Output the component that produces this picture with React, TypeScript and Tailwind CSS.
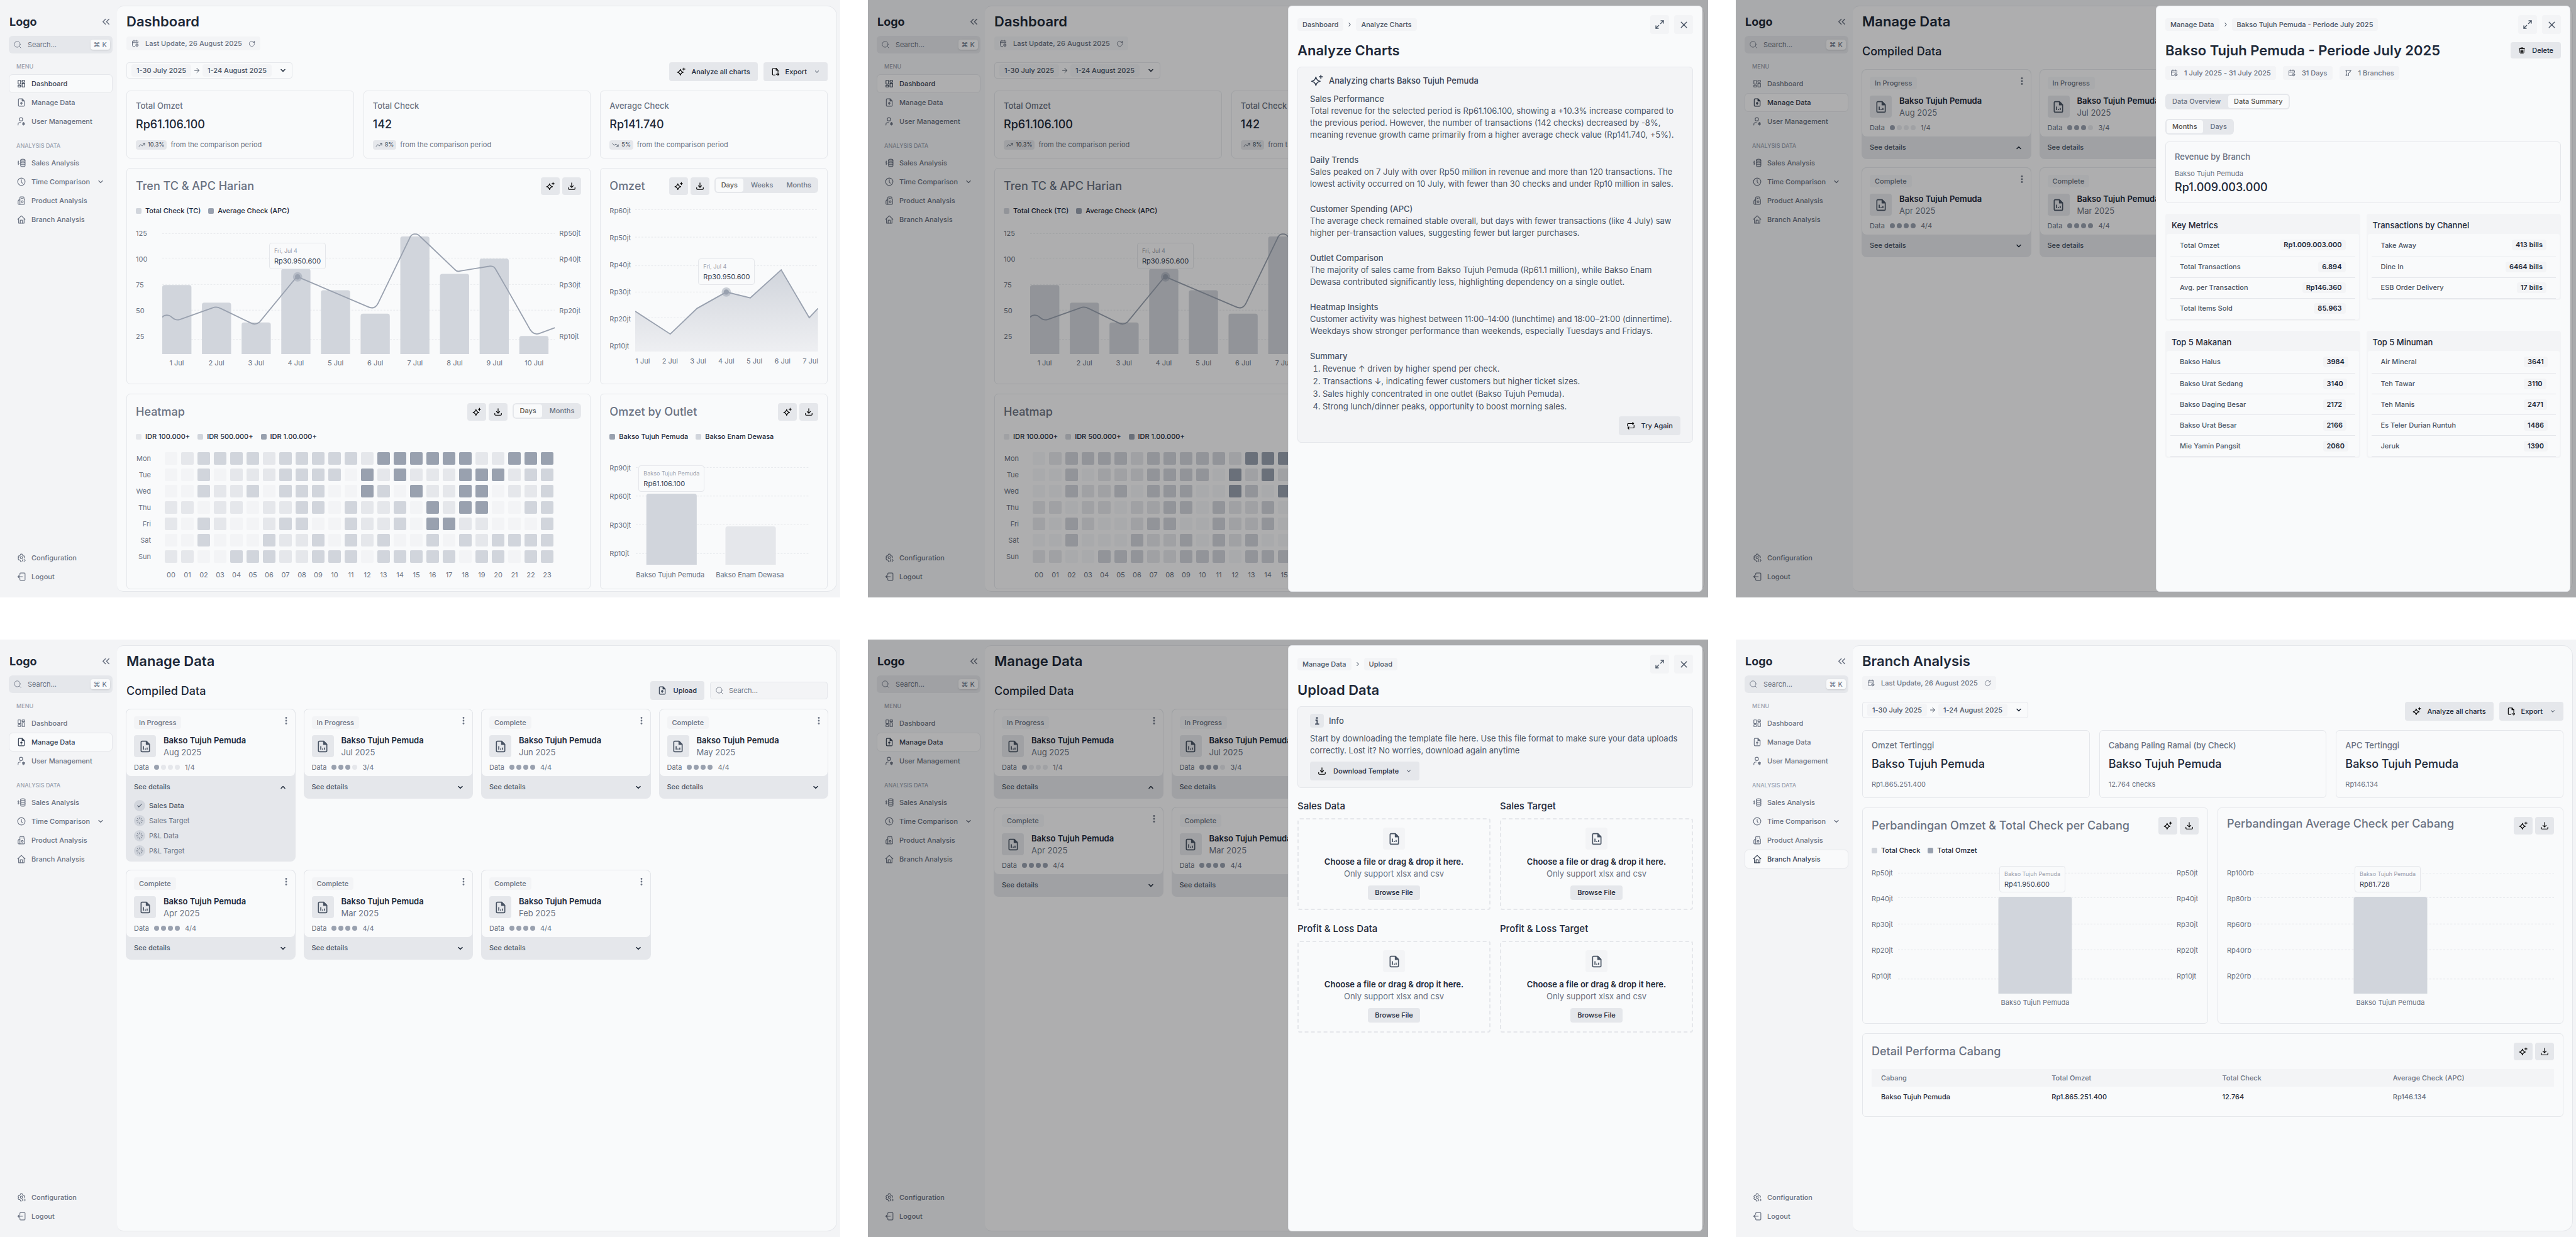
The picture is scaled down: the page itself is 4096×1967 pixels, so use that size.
import { useId, type ReactNode } from "react";
import {
  ArrowRight,
  Check,
  ChevronDown,
  ChevronRight,
  ChevronUp,
  ChevronsLeft,
  Loader,
  Maximize2,
  RotateCw,
  Search,
  TrendingDown,
  TrendingUp,
  X,
} from "lucide-react";

/* ---------- icons ---------- */

type IconProps = { className?: string; strokeWidth?: number };

function Icon({ className = "size-3.5", strokeWidth = 2, children }: IconProps & { children: ReactNode }) {
  return (
    <svg
      viewBox="0 0 24 24"
      fill="none"
      stroke="currentColor"
      strokeWidth={strokeWidth}
      strokeLinecap="round"
      strokeLinejoin="round"
      className={`shrink-0 ${className}`}
      aria-hidden="true"
    >
      {children}
    </svg>
  );
}

const SparkleIcon = (p: IconProps) => (
  <Icon {...p}>
    <path d="M10 5.5C11 10 13.500 12.500 18 13.500C13.500 14.500 11 17 10 21.500C9 17 6.500 14.500 2 13.500C6.500 12.500 9 10 10 5.500Z" />
    <path d="M19.500 2v6M16.500 5h6" />
  </Icon>
);

const DownloadIcon = (p: IconProps) => (
  <Icon {...p}>
    <path d="M12 3v12M7.5 11l4.5 4.5 4.5-4.5M3 16v3a2 2 0 0 0 2 2h14a2 2 0 0 0 2-2v-3" />
  </Icon>
);

const ExportIcon = (p: IconProps) => (
  <Icon {...p}>
    <path d="M11 21H6a2 2 0 0 1-2-2V5a2 2 0 0 1 2-2h8l5 5v6" />
    <path d="M14 3v5h5" />
    <path d="M14 19h7M18.5 16l3 3-3 3" />
  </Icon>
);

const DashboardIcon = (p: IconProps) => (
  <Icon {...p}>
    <rect x="3" y="3" width="7" height="10" rx="1" />
    <rect x="14" y="3" width="7" height="5" rx="1" />
    <rect x="14" y="11" width="7" height="10" rx="1" />
    <rect x="3" y="16" width="7" height="5" rx="1" />
  </Icon>
);

const FileUpIcon = (p: IconProps) => (
  <Icon {...p}>
    <path d="M14 2H6a2 2 0 0 0-2 2v16a2 2 0 0 0 2 2h12a2 2 0 0 0 2-2V8Z" />
    <path d="M14 2v6h6Z" fill="currentColor" />
    <path d="M12 18v-6M9.5 14l2.5-2.5 2.5 2.5Z" fill="currentColor" />
  </Icon>
);

const UserGearIcon = (p: IconProps) => (
  <Icon {...p}>
    <circle cx="11" cy="6.5" r="4.5" />
    <path d="M3 22v-2c0-3 2-5 5.5-5H10" />
    <circle cx="18" cy="18.5" r="2.5" />
    <path d="M18 14.5v8M14.5 16.5l7 4M21.5 16.5l-7 4" strokeWidth={1.5} />
  </Icon>
);

const CoinsIcon = (p: IconProps) => (
  <Icon {...p}>
    <ellipse cx="16" cy="4.5" rx="6" ry="2.5" />
    <path d="M10 4.5v15c0 1.4 2.7 2.5 6 2.5s6-1.1 6-2.5v-15" />
    <path d="M10 9.5c0 1.4 2.7 2.5 6 2.5s6-1.1 6-2.5M10 14.5c0 1.4 2.7 2.5 6 2.5s6-1.1 6-2.5" />
    <path d="M6 9.2C5.5 8.3 2 8 2 10s4 1.6 4 3.8-3.6 1.9-4.200.9M4 6.8v10" strokeWidth={1.6} />
  </Icon>
);

const ClockIcon = (p: IconProps) => (
  <Icon {...p}>
    <circle cx="12" cy="12" r="10" />
    <path d="M12 6.5V12l2.5 4" />
  </Icon>
);

const ProductIcon = (p: IconProps) => (
  <Icon {...p}>
    <path d="M8 22V4a2 2 0 0 1 2-2h7a2 2 0 0 1 2 2v3l2 3v10a2 2 0 0 1-2 2Z" />
    <path d="M8 10H5l-2 3v7a2 2 0 0 0 2 2h3" />
    <circle cx="14.5" cy="15" r="2.5" />
    <path d="M12 6h3" />
  </Icon>
);

const HomeIcon = (p: IconProps) => (
  <Icon {...p}>
    <path d="M2 11.5 12 2l10 9.5" />
    <path d="M4.5 9.5V22h15V9.5" />
    <path d="M9 22v-7a1 1 0 0 1 1-1h4a1 1 0 0 1 1 1v7" />
  </Icon>
);

const ConfigIcon = (p: IconProps) => (
  <Icon {...p}>
    <path d="M20 12.5l1-2.5-2-3.4-2.7.3L14.8 4 14 2h-4l-.8 2-1.6 2.9-2.7-.3L3 10l1.7 2L3 14.5l2 3.4 2.6-.3L9.2 20l.8 2h2" />
    <circle cx="12" cy="11.5" r="3" />
    <path d="M16.5 16.5 14.5 19l2 2.5M20.5 16.5l2 2.5-2 2.5" />
  </Icon>
);

const LogoutIcon = (p: IconProps) => (
  <Icon {...p}>
    <path d="M8 7V4a2 2 0 0 1 2-2h10a2 2 0 0 1 2 2v16a2 2 0 0 1-2 2H10a2 2 0 0 1-2-2v-3" />
    <path d="M15 12H3M6 8.5 2.5 12 6 15.5Z" fill="currentColor" />
  </Icon>
);

const CalendarIcon = (p: IconProps) => (
  <Icon {...p}>
    <path d="M21 10V6a2 2 0 0 0-2-2H5a2 2 0 0 0-2 2v13a2 2 0 0 0 2 2h6" />
    <path d="M8 2v4M16 2v4M3 9.5h18" />
    <circle cx="17.5" cy="17.5" r="4" fill="currentColor" fillOpacity={0.5} />
  </Icon>
);

const BranchesIcon = (p: IconProps) => (
  <Icon {...p}>
    <circle cx="6" cy="5" r="2" />
    <circle cx="6" cy="19" r="2" />
    <path d="M6 7v10M13 17v-5l5-3V7" />
    <circle cx="18" cy="5" r="2" />
    <path d="M11 5h4M13 21v-4" />
  </Icon>
);

const RepeatIcon = (p: IconProps) => (
  <Icon {...p}>
    <path d="M3 13V8a2 2 0 0 1 2-2h15M17 3l3 3-3 3" />
    <path d="M21 11v5a2 2 0 0 1-2 2H4M7 15l-3 3 3 3" />
  </Icon>
);

const TrashIcon = (p: IconProps) => (
  <Icon {...p}>
    <path d="M3 7h18M8 7V4h8v3M5 7l1 13a2 2 0 0 0 2 1h8a2 2 0 0 0 2-1l1-13" />
    <path d="M8 11h8M8.5 14.5h7M9 18h6M10 11v8M14 11v8" />
  </Icon>
);

const FileChartIcon = (p: IconProps) => (
  <Icon {...p}>
    <path d="M14 2H6a2 2 0 0 0-2 2v16a2 2 0 0 0 2 2h12a2 2 0 0 0 2-2V8Z" />
    <path d="M14 2.5V8h5.5Z" fill="currentColor" />
    <path d="M8.5 11.5V18M12 16v2M15.5 14v4" strokeLinecap="butt" />
  </Icon>
);

const InfoIcon = (p: IconProps) => (
  <Icon {...p}>
    <path d="M8 10.5h4.5V21M7 21h11" strokeWidth={3} strokeLinecap="butt" strokeLinejoin="miter" />
    <path d="M10.5 3h3.5v3h-3.5Z" fill="currentColor" strokeWidth={1} />
  </Icon>
);

const KebabIcon = (p: IconProps) => (
  <Icon {...p}>
    <g fill="currentColor" stroke="none">
      <circle cx="12" cy="3" r="2.8" />
      <circle cx="12" cy="12" r="2.8" />
      <circle cx="12" cy="21" r="2.8" />
    </g>
  </Icon>
);

/* ---------- sidebar ---------- */

type NavEntry = { label: string; icon: (p: IconProps) => ReactNode; chevron?: boolean };

const menuItems: NavEntry[] = [
  { label: "Dashboard", icon: DashboardIcon },
  { label: "Manage Data", icon: FileUpIcon },
  { label: "User Management", icon: UserGearIcon },
];
const analysisItems: NavEntry[] = [
  { label: "Sales Analysis", icon: CoinsIcon },
  { label: "Time Comparison", icon: ClockIcon, chevron: true },
  { label: "Product Analysis", icon: ProductIcon },
  { label: "Branch Analysis", icon: HomeIcon },
];
const footerItems: NavEntry[] = [
  { label: "Configuration", icon: ConfigIcon },
  { label: "Logout", icon: LogoutIcon },
];

function NavItem({ item, active }: { item: NavEntry; active?: boolean }) {
  const Glyph = item.icon;
  return (
    <a
      href="#"
      className={`flex h-[30px] items-center gap-[9px] rounded-md border px-3 text-[11px] font-medium ${
        active ? "border-gray-200 bg-gray-50 text-gray-700" : "border-transparent text-gray-500"
      }`}
    >
      <Glyph className="size-3.5" />
      {item.label}
      {item.chevron && <ChevronDown className="ml-auto size-3" strokeWidth={2.5} />}
    </a>
  );
}

function Sidebar({ active }: { active: string }) {
  return (
    <aside className="flex w-[186px] shrink-0 flex-col pt-5 pr-[7px] pb-[18px] pl-3.5">
      <div className="flex h-7 items-center justify-between px-px">
        <span className="text-[18px] font-bold text-gray-800">Logo</span>
        <button type="button" aria-label="Collapse sidebar" className="text-gray-500">
          <ChevronsLeft className="size-[19px]" strokeWidth={2} />
        </button>
      </div>
      <label className="mt-[9px] flex h-7 items-center gap-[9px] rounded-md bg-gray-200 pr-1 pl-[7px] text-gray-500">
        <Search className="size-3.5 shrink-0" strokeWidth={1.5} />
        <input
          type="text"
          aria-label="Search"
          placeholder="Search..."
          className="w-full min-w-0 bg-transparent text-[11px] outline-none placeholder:text-gray-500"
        />
        <kbd className="flex h-4 shrink-0 items-center rounded-[4px] bg-gray-50 px-[5px] font-['Inter'] text-[11px] whitespace-nowrap shadow-sm">
          ⌘ K
        </kbd>
      </label>
      <h2 className="mt-3.5 px-3 text-[9px] leading-[14px] font-medium text-gray-400">MENU</h2>
      <nav className="mt-[5px]">
        {menuItems.map((item) => (
          <NavItem key={item.label} item={item} active={item.label === active} />
        ))}
      </nav>
      <h2 className="mt-[17px] px-3 text-[9px] leading-[14px] font-medium text-gray-400">ANALYSIS DATA</h2>
      <nav className="mt-[5px]">
        {analysisItems.map((item) => (
          <NavItem key={item.label} item={item} active={item.label === active} />
        ))}
      </nav>
      <nav className="mt-auto">
        {footerItems.map((item) => (
          <NavItem key={item.label} item={item} />
        ))}
      </nav>
    </aside>
  );
}

function Frame({ active, drawer, children }: { active: string; drawer?: ReactNode; children: ReactNode }) {
  return (
    <section className="relative flex min-w-0 overflow-hidden bg-gray-100">
      <div className="flex min-w-0 flex-1" inert={Boolean(drawer)}>
        <Sidebar active={active} />
        <main className="my-[9px] mr-[5px] min-w-0 flex-1 rounded-l-[10px] rounded-r-[16px] border border-l-0 border-gray-200 bg-gray-50 pt-2.5 pr-3.5 pl-[15px]">
          {children}
        </main>
      </div>
      {drawer && (
        <>
          <div className="absolute inset-0 bg-black/30" />
          <div
            role="dialog"
            className="absolute top-[9px] right-[9px] bottom-[9px] w-[659px] rounded-md border border-gray-200 bg-gray-50 p-3.5"
          >
            {drawer}
          </div>
        </>
      )}
    </section>
  );
}

/* ---------- shared pieces ---------- */

const PageTitle = ({ children }: { children: ReactNode }) => (
  <h1 className="text-[22px] leading-7 font-semibold text-gray-800">{children}</h1>
);

function GrayButton({ children }: { children: ReactNode }) {
  return (
    <button
      type="button"
      className="flex h-[30px] items-center rounded-[4px] bg-gray-200 px-3 text-[11px] font-medium whitespace-nowrap text-gray-800"
    >
      {children}
    </button>
  );
}

function PageHeader({ title }: { title: string }) {
  return (
    <>
      <PageTitle>{title}</PageTitle>
      <div className="mt-2.5 flex">
        <div className="flex h-[22px] items-center rounded-[4px] bg-gray-100 px-2 text-[11px] font-medium text-gray-500">
          <CalendarIcon className="mr-2.5 size-3" />
          Last Update, 26 August 2025
          <button type="button" aria-label="Refresh" className="ml-2.5">
            <RotateCw className="size-[11px]" />
          </button>
        </div>
      </div>
      <div className="mt-[19px] flex items-start justify-between">
        <button
          type="button"
          aria-label="Select comparison period"
          className="flex h-[26px] items-center rounded-[4px] border border-gray-200 pr-2 pl-[7px] text-[11px] font-medium text-gray-600"
        >
          <span className="rounded-[4px] bg-gray-100 px-2 leading-5">1-30 July 2025</span>
          <ArrowRight className="mx-[3px] size-3" strokeWidth={2} />
          <span className="rounded-[4px] bg-gray-100 px-2 leading-5">1-24 August 2025</span>
          <ChevronDown className="ml-3 size-3 text-gray-800" strokeWidth={3} />
        </button>
        <div className="flex gap-[9px]">
          <GrayButton>
            <SparkleIcon className="mr-[9px] size-3.5 text-black" />
            Analyze all charts
          </GrayButton>
          <GrayButton>
            <ExportIcon className="mr-[9px] size-3.5 text-black" />
            Export
            <ChevronDown className="ml-[11px] size-2.5 text-gray-600" strokeWidth={2.5} />
          </GrayButton>
        </div>
      </div>
    </>
  );
}

const Card = ({ className = "", children }: { className?: string; children: ReactNode }) => (
  <div className={`min-w-0 rounded-md border border-gray-200 p-3.5 ${className}`}>{children}</div>
);

function StatCard({ label, value, children }: { label: string; value: string; children: ReactNode }) {
  return (
    <Card className="pb-[13px]">
      <div className="text-[13px] leading-[18px] font-medium text-gray-500">{label}</div>
      <div className="mt-[9px] text-[18px] leading-6 font-medium text-gray-800">{value}</div>
      <div className="mt-3 flex h-4 items-center gap-1.5 text-[11px] text-gray-500">{children}</div>
    </Card>
  );
}

function ChangeStat({ label, value, change, down }: { label: string; value: string; change: string; down?: boolean }) {
  return (
    <StatCard label={label} value={value}>
      <span className="flex h-[15px] items-center gap-1 rounded-[4px] bg-gray-200 px-1 text-[9px] font-medium text-gray-600">
        {down ? <TrendingDown className="size-[11px]" /> : <TrendingUp className="size-[11px]" />}
        {change}
      </span>
      from the comparison period
    </StatCard>
  );
}

function Tabs({ items, active }: { items: string[]; active: string }) {
  return (
    <div role="tablist" className="flex h-[25px] gap-[3px] rounded-md bg-gray-200 p-0.5">
      {items.map((item) => (
        <button
          key={item}
          type="button"
          role="tab"
          aria-selected={item === active}
          className={`rounded-[4px] px-[9px] text-[11px] font-medium ${
            item === active ? "bg-gray-50 text-stone-600" : "text-gray-500"
          }`}
        >
          {item}
        </button>
      ))}
    </div>
  );
}

const squareButton = "flex h-7 w-[30px] items-center justify-center rounded-[4px] bg-gray-200 text-black";

function CardHeader({ title, top, children }: { title: string; top?: boolean; children?: ReactNode }) {
  return (
    <div className={`flex h-7 justify-between ${top ? "items-start" : "items-center"}`}>
      <h2 className="text-[18px] leading-[22px] font-medium whitespace-nowrap text-gray-500">{title}</h2>
      <div className="flex h-7 items-start">
        <button type="button" aria-label={`Analyze ${title}`} className={squareButton}>
          <SparkleIcon className="size-3.5" />
        </button>
        <button type="button" aria-label={`Download ${title}`} className={`ml-1 ${squareButton}`}>
          <DownloadIcon className="size-3.5" />
        </button>
        {children && <div className="ml-2">{children}</div>}
      </div>
    </div>
  );
}

const swatchColor = ["bg-gray-100", "bg-gray-200", "bg-gray-300", "bg-gray-400"];

function Legend({ items }: { items: [string, number][] }) {
  return (
    <div className="mt-[17px] flex h-4 items-center gap-3 text-[11px] font-medium text-gray-800">
      {items.map(([label, level]) => (
        <span key={label} className="flex items-center gap-1.5">
          <span className={`size-[9px] rounded-[2px] ${swatchColor[level]}`} />
          {label}
        </span>
      ))}
    </div>
  );
}

const AxisLabels = ({ items, className }: { items: string[]; className: string }) => (
  <div className={`flex shrink-0 flex-col justify-between text-[11px] leading-4 whitespace-nowrap text-gray-500 ${className}`}>
    {items.map((item) => (
      <span key={item}>{item}</span>
    ))}
  </div>
);

const Tooltip = ({ title, value, className }: { title: string; value: string; className: string }) => (
  <div className={`absolute rounded-[4px] border border-gray-200 bg-gray-50 px-[7px] pt-1 pb-[3px] whitespace-nowrap ${className}`}>
    <div className="text-[9px] leading-[15px] text-gray-400">{title}</div>
    <div className="text-[11px] leading-[18px] text-gray-700">{value}</div>
  </div>
);

function GridLines({ ys, width }: { ys: number[]; width: number }) {
  return (
    <g className="stroke-gray-200" strokeDasharray="3 2.5">
      {ys.map((y) => (
        <line key={y} x1="0" x2={width} y1={y} y2={y} />
      ))}
    </g>
  );
}

function Bar({ x, y, w, bottom, className }: { x: number; y: number; w: number; bottom: number; className: string }) {
  return (
    <path
      className={className}
      d={`M${x} ${bottom}V${y + 4}a4 4 0 0 1 4-4h${w - 8}a4 4 0 0 1 4 4V${bottom}Z`}
    />
  );
}

const Marker = ({ x, y }: { x: number; y: number }) => (
  <g className="fill-gray-400">
    <circle cx={x} cy={y} r="8" fillOpacity={0.5} />
    <circle cx={x} cy={y} r="4.5" />
  </g>
);

/* ---------- dashboard ---------- */

const jutaAxis = ["Rp50jt", "Rp40jt", "Rp30jt", "Rp20jt", "Rp10jt"];
const barTops = [97, 127, 161, 69, 106, 146, 14, 78, 52, 184];

function TrendCard() {
  return (
    <Card className="col-span-2 pb-[25px]">
      <CardHeader title="Tren TC & APC Harian" />
      <Legend items={[["Total Check (TC)", 2], ["Average Check (APC)", 3]]} />
      <div className="mt-5 flex">
        <AxisLabels items={["125", "100", "75", "50", "25"]} className="h-[180px] w-[42px]" />
        <div className="relative min-w-0 flex-1">
          <svg viewBox="0 0 673 215" preserveAspectRatio="none" className="block h-[200px] w-full">
            <GridLines ys={[9, 51, 96, 140, 190]} width={673} />
            {barTops.map((top, i) => (
              <Bar key={i} x={i * 68} y={top} w={50} bottom={215} className="fill-gray-300" />
            ))}
            <path
              className="fill-none stroke-gray-400"
              strokeWidth={2}
              d="M0 152C3 148 11 147 15 151C19 154 22 158 30 156L86 136Q93 133 100 137L152 162Q160 166 167 160L228 86Q232 81 237 85L352 134Q364 140 370 128L424 17C427 8 437 8 442 14L501 70Q505 75 511 73L560 65Q568 63 572 71L594 109L627 167Q635 184 646 180L673 170"
            />
            <Marker x={232} y={83} />
          </svg>
          <Tooltip title="Fri, Jul 4" value="Rp30.950.600" className="top-[23px] left-[170px]" />
          <div className="mt-1.5 flex justify-between pr-2.5 text-[11px] leading-4 text-gray-500">
            {barTops.map((_, i) => (
              <span key={i} className="w-[46px] text-center">
                {i + 1} Jul
              </span>
            ))}
          </div>
        </div>
        <AxisLabels items={jutaAxis} className="h-[180px] w-[42px] pl-[7px]" />
      </div>
    </Card>
  );
}

function OmzetCard() {
  const gradientId = useId();
  return (
    <Card>
      <CardHeader title="Omzet">
        <Tabs items={["Days", "Weeks", "Months"]} active="Days" />
      </CardHeader>
      <div className="mt-[17px] flex">
        <AxisLabels items={["Rp60jt", ...jutaAxis]} className="h-[231px] w-[41px]" />
        <div className="relative min-w-0 flex-1">
          <svg viewBox="0 0 313 250" preserveAspectRatio="none" className="block h-[232px] w-full">
            <defs>
              <linearGradient id={gradientId} x1="0" y1="0" x2="0" y2="1">
                <stop offset="0" stopColor="#d1d5dc" />
                <stop offset="1" stopColor="#eeeff2" />
              </linearGradient>
            </defs>
            <GridLines ys={[7, 54, 103, 148, 192]} width={313} />
            <path
              fill={`url(#${gradientId})`}
              d="M0 181L60 220L106 176L156 148L197 158L250 110L298 192L313 176V250H0Z"
            />
            <path
              className="fill-none stroke-gray-400"
              strokeWidth={2}
              d="M0 181L60 220L106 176L156 148L197 158L250 110L298 192L313 176"
            />
            <Marker x={156} y={148} />
          </svg>
          <Tooltip title="Fri, Jul 4" value="Rp30.950.600" className="top-[84px] left-[100px]" />
          <div className="mt-[7px] flex justify-between text-[11px] leading-4 text-gray-500">
            {[1, 2, 3, 4, 5, 6, 7].map((d) => (
              <span key={d}>{d} Jul</span>
            ))}
          </div>
        </div>
      </div>
    </Card>
  );
}

const heat: [string, string][] = [
  ["Mon", "012222122222133333311333"],
  ["Tue", "002011122220313111333122"],
  ["Wed", "002112022200320311330112"],
  ["Thu", "110110112202112031330022"],
  ["Fri", "102100122002112033110002"],
  ["Sat", "002000211202120020212222"],
  ["Sun", "110022211222022222022022"],
];

function HeatmapCard() {
  return (
    <Card className="col-span-2">
      <CardHeader title="Heatmap">
        <Tabs items={["Days", "Months"]} active="Days" />
      </CardHeader>
      <Legend items={[["IDR 100.000+", 1], ["IDR 500.000+", 2], ["IDR 1.00.000+", 3]]} />
      <div className="mt-[17px] flex flex-col gap-1.5 text-[11px] text-gray-500">
        {heat.map(([day, levels]) => (
          <div key={day} className="flex h-5 items-center gap-1.5">
            <span className="mr-4 w-6 text-right">{day}</span>
            {levels.split("").map((level, i) => (
              <span key={i} className={`size-5 rounded-[2px] ${swatchColor[Number(level)]}`} />
            ))}
          </div>
        ))}
        <div className="mt-[5px] ml-[46px] flex h-4 items-center gap-1.5">
          {heat[0][1].split("").map((_, i) => (
            <span key={i} className="w-5 text-center">
              {String(i).padStart(2, "0")}
            </span>
          ))}
        </div>
      </div>
    </Card>
  );
}

function OutletCard() {
  return (
    <Card>
      <CardHeader title="Omzet by Outlet" />
      <Legend items={[["Bakso Tujuh Pemuda", 3], ["Bakso Enam Dewasa", 2]]} />
      <div className="mt-[34px] flex">
        <AxisLabels items={["Rp90jt", "Rp60jt", "Rp30jt", "Rp10jt"]} className="h-[152px] w-[42px]" />
        <div className="relative mr-[13px] min-w-0 flex-1">
          <svg viewBox="0 0 297 175" preserveAspectRatio="none" className="block h-[162px] w-full">
            <GridLines ys={[8, 57, 106, 156]} width={297} />
            <Bar x={18} y={53} w={86} bottom={175} className="fill-gray-300" />
            <Bar x={153} y={109} w={86} bottom={175} className="fill-gray-200" />
          </svg>
          <Tooltip title="Bakso Tujuh Pemuda" value="Rp61.106.100" className="top-1 left-1" />
          <div className="mt-2 flex gap-[18px] text-[11px] leading-4 whitespace-nowrap text-gray-500">
            <span>Bakso Tujuh Pemuda</span>
            <span>Bakso Enam Dewasa</span>
          </div>
        </div>
      </div>
    </Card>
  );
}

function DashboardPage() {
  return (
    <>
      <PageHeader title="Dashboard" />
      <div className="mt-[15px] grid grid-cols-3 gap-[15px]">
        <ChangeStat label="Total Omzet" value="Rp61.106.100" change="10.3%" />
        <ChangeStat label="Total Check" value="142" change="8%" />
        <ChangeStat label="Average Check" value="Rp141.740" change="5%" down />
        <TrendCard />
        <OmzetCard />
        <HeatmapCard />
        <OutletCard />
      </div>
    </>
  );
}

/* ---------- manage data ---------- */

const files = [
  { month: "Aug 2025", status: "In Progress", done: 1 },
  { month: "Jul 2025", status: "In Progress", done: 3 },
  { month: "Jun 2025", status: "Complete", done: 4 },
  { month: "May 2025", status: "Complete", done: 4 },
  { month: "Apr 2025", status: "Complete", done: 4 },
  { month: "Mar 2025", status: "Complete", done: 4 },
  { month: "Feb 2025", status: "Complete", done: 4 },
];

function FileCard({ file, arrowUp, expanded }: { file: (typeof files)[number]; arrowUp?: boolean; expanded?: boolean }) {
  return (
    <article className="min-w-0 self-start rounded-lg bg-gray-200">
      <div className="h-[108px] rounded-lg border border-gray-200 bg-gray-50 px-3 pt-[11px]">
        <div className="flex items-start justify-between">
          <span className="rounded-[4px] bg-gray-100 px-2 text-[11px] leading-5 font-medium text-gray-500">{file.status}</span>
          <button type="button" aria-label="More actions" className="-mr-1 pt-px text-gray-500">
            <KebabIcon className="size-3" />
          </button>
        </div>
        <div className="mt-2.5 flex h-[35px] items-center gap-3">
          <span className="flex size-[35px] items-center justify-center rounded-[4px] bg-gray-200 text-gray-600">
            <FileChartIcon className="size-5" />
          </span>
          <div className="text-[13px] leading-[19px]">
            <h3 className="font-semibold text-gray-800">Bakso Tujuh Pemuda</h3>
            <p className="text-gray-500">{file.month}</p>
          </div>
        </div>
        <div className="mt-2 flex h-4 items-center text-[11px] text-gray-500">
          Data
          <span className="mx-2 flex gap-[3px]">
            {[1, 2, 3, 4].map((n) => (
              <span key={n} className={`size-2 rounded-full ${n <= file.done ? "bg-gray-400" : "bg-gray-200"}`} />
            ))}
          </span>
          {file.done}/4
        </div>
      </div>
      <button
        type="button"
        aria-expanded={Boolean(expanded)}
        className="flex h-[35px] w-full items-center justify-between pr-3.5 pb-0.5 pl-[13px] text-[11px] font-medium text-gray-600"
      >
        See details
        {arrowUp ? (
          <ChevronUp className="size-3 text-gray-800" strokeWidth={3} />
        ) : (
          <ChevronDown className="size-3 text-gray-800" strokeWidth={3} />
        )}
      </button>
      {expanded && (
        <ul className="space-y-1.5 px-[13px] pt-0.5 pb-2 text-[11px] text-gray-500">
          {["Sales Data", "Sales Target", "P&L Data", "P&L Target"].map((name, i) => (
            <li key={name} className={`flex h-[18px] items-center gap-1.5 ${i === 0 ? "font-medium text-gray-600" : ""}`}>
              <span className="flex size-[18px] items-center justify-center rounded-full bg-gray-300">
                {i === 0 ? <Check className="size-2.5" strokeWidth={2.5} /> : <Loader className="size-3" strokeWidth={2} />}
              </span>
              {name}
            </li>
          ))}
        </ul>
      )}
    </article>
  );
}

function ManagePage({ expanded }: { expanded?: boolean }) {
  return (
    <>
      <PageTitle>Manage Data</PageTitle>
      <div className="mt-[18px] flex items-center justify-between">
        <h2 className="text-[18px] font-medium text-gray-800">Compiled Data</h2>
        <div className="flex items-center gap-[9px]">
          <GrayButton>
            <FileUpIcon className="mr-2.5 size-3.5 text-gray-700" />
            Upload
          </GrayButton>
          <label className="flex h-7 w-[187px] items-center gap-2 rounded-[4px] border border-gray-200 bg-gray-100 px-[7px] text-gray-500">
            <Search className="size-3.5 shrink-0" strokeWidth={1.5} />
            <input
              type="text"
              aria-label="Search files"
              placeholder="Search..."
              className="w-full min-w-0 bg-transparent text-[11px] outline-none placeholder:text-gray-500"
            />
          </label>
        </div>
      </div>
      <div className="-mx-px mt-3.5 grid grid-cols-4 gap-[13px]">
        {files.map((file, i) => (
          <FileCard key={file.month} file={file} arrowUp={i === 0} expanded={expanded && i === 0} />
        ))}
      </div>
    </>
  );
}

/* ---------- drawers ---------- */

function DrawerHeader({ crumbs, title, action }: { crumbs: [string, string]; title: string; action?: ReactNode }) {
  const square = "flex size-[30px] items-center justify-center rounded-[4px] bg-gray-100 text-gray-600";
  const crumb = "rounded-[4px] bg-gray-100 px-2 leading-5";
  return (
    <>
      <div className="flex h-[30px] items-center justify-between">
        <nav aria-label="Breadcrumb" className="flex items-center gap-[5px] text-[11px] font-medium text-gray-600">
          <a href="#" className={crumb}>
            {crumbs[0]}
          </a>
          <ChevronRight className="size-2.5" strokeWidth={2.5} />
          <a href="#" className={crumb}>
            {crumbs[1]}
          </a>
        </nav>
        <div className="flex gap-2">
          <button type="button" aria-label="Expand" className={square}>
            <Maximize2 className="size-4" />
          </button>
          <button type="button" aria-label="Close" className={square}>
            <X className="size-[17px]" />
          </button>
        </div>
      </div>
      <div className="mt-3 flex items-center justify-between">
        <PageTitle>{title}</PageTitle>
        {action}
      </div>
    </>
  );
}

const analysis: [string, string][] = [
  [
    "Sales Performance",
    "Total revenue for the selected period is Rp61.106.100, showing a +10.3% increase compared to the previous period. However, the number of transactions (142 checks) decreased by -8%, meaning revenue growth came primarily from a higher average check value (Rp141.740, +5%).",
  ],
  [
    "Daily Trends",
    "Sales peaked on 7 July with over Rp50 million in revenue and more than 120 transactions. The lowest activity occurred on 10 July, with fewer than 30 checks and under Rp10 million in sales.",
  ],
  [
    "Customer Spending (APC)",
    "The average check remained stable overall, but days with fewer transactions (like 4 July) saw higher per-transaction values, suggesting fewer but larger purchases.",
  ],
  [
    "Outlet Comparison",
    "The majority of sales came from Bakso Tujuh Pemuda (Rp61.1 million), while Bakso Enam Dewasa contributed significantly less, highlighting dependency on a single outlet.",
  ],
  [
    "Heatmap Insights",
    "Customer activity was highest between 11:00–14:00 (lunchtime) and 18:00–21:00 (dinnertime). Weekdays show stronger performance than weekends, especially Tuesdays and Fridays.",
  ],
];

function AnalyzeDrawer() {
  return (
    <>
      <DrawerHeader crumbs={["Dashboard", "Analyze Charts"]} title="Analyze Charts" />
      <div className="mt-3 rounded-md border border-gray-200 bg-gray-100 px-[19px] py-[11px] text-[13px] leading-[19px] text-gray-600">
        <div className="flex h-5 items-center gap-[9px] font-medium text-gray-700">
          <SparkleIcon className="ml-px size-5" />
          Analyzing charts Bakso Tujuh Pemuda
        </div>
        <div className="mt-2.5 flex flex-col gap-[21px]">
          {analysis.map(([heading, text]) => (
            <section key={heading}>
              <h3 className="font-medium">{heading}</h3>
              <p>{text}</p>
            </section>
          ))}
          <section>
            <h3 className="font-medium">Summary</h3>
            <ol className="list-decimal pl-5 leading-5">
              <li>Revenue ↑ driven by higher spend per check.</li>
              <li>Transactions ↓, indicating fewer customers but higher ticket sizes.</li>
              <li>Sales highly concentrated in one outlet (Bakso Tujuh Pemuda).</li>
              <li>Strong lunch/dinner peaks, opportunity to boost morning sales.</li>
            </ol>
          </section>
        </div>
        <div className="mt-1.5 flex justify-end">
          <GrayButton>
            <RepeatIcon className="mr-2.5 size-3.5 text-black" />
            Try Again
          </GrayButton>
        </div>
      </div>
    </>
  );
}

type Row = [string, string];

function DataTable({ title, rows, alignLeft }: { title: string; rows: Row[]; alignLeft?: boolean }) {
  return (
    <section className="self-start rounded-[4px] bg-gray-100 px-0.5 pb-0.5">
      <h3 className="px-2 pt-1 text-[13px] leading-7 font-medium text-gray-800">{title}</h3>
      <div className="rounded-[4px] bg-gray-50 px-1.5">
        <table className="w-full text-[11px]">
          <tbody>
            {rows.map(([name, value]) => (
              <tr key={name} className="h-[33px] border-b border-gray-200 first:h-9">
                <th scope="row" className="pl-[15px] text-left font-medium text-gray-600">
                  {name}
                </th>
                <td className={alignLeft ? "w-[51px]" : "pr-[15px] text-right"}>
                  <span className="inline-block rounded-[4px] bg-gray-100 px-1.5 leading-[17px] font-semibold text-gray-800">
                    {value}
                  </span>
                </td>
              </tr>
            ))}
          </tbody>
        </table>
      </div>
    </section>
  );
}

function SummaryDrawer() {
  const chip = "flex h-[22px] items-center gap-2.5 rounded-[4px] bg-gray-100 px-2";
  return (
    <>
      <DrawerHeader
        crumbs={["Manage Data", "Bakso Tujuh Pemuda - Periode July 2025"]}
        title="Bakso Tujuh Pemuda - Periode July 2025"
        action={
          <button
            type="button"
            className="flex h-[26px] items-center gap-2.5 rounded-[4px] bg-gray-200 px-3 text-[11px] font-medium text-gray-800"
          >
            <TrashIcon className="size-3 text-black" />
            Delete
          </button>
        }
      />
      <div className="mt-[11px] flex gap-[11px] text-[11px] font-medium text-gray-500">
        <span className={chip}>
          <CalendarIcon className="size-3" />1 July 2025 - 31 July 2025
        </span>
        <span className={chip}>
          <CalendarIcon className="size-3" />
          31 Days
        </span>
        <span className={chip}>
          <BranchesIcon className="size-3" />1 Branches
        </span>
      </div>
      <div className="mt-[22px] flex">
        <Tabs items={["Data Overview", "Data Summary"]} active="Data Summary" />
      </div>
      <div className="mt-[15px] flex">
        <Tabs items={["Months", "Days"]} active="Months" />
      </div>
      <Card className="mt-[11px] pb-3">
        <div className="text-[13px] leading-[18px] font-medium text-gray-500">Revenue by Branch</div>
        <div className="mt-2.5 text-[11px] leading-4 text-gray-500">Bakso Tujuh Pemuda</div>
        <div className="mt-0.5 text-[18px] leading-6 font-medium text-gray-800">Rp1.009.003.000</div>
      </Card>
      <div className="mt-[17px] grid grid-cols-2 gap-x-2.5 gap-y-4">
        <DataTable
          title="Key Metrics"
          rows={[
            ["Total Omzet", "Rp1.009.003.000"],
            ["Total Transactions", "6.894"],
            ["Avg. per Transaction", "Rp146.360"],
            ["Total Items Sold", "85.963"],
          ]}
        />
        <DataTable
          title="Transactions by Channel"
          rows={[
            ["Take Away", "413 bills"],
            ["Dine In", "6464 bills"],
            ["ESB Order Delivery", "17 bills"],
          ]}
        />
        <DataTable
          title="Top 5 Makanan"
          alignLeft
          rows={[
            ["Bakso Halus", "3984"],
            ["Bakso Urat Sedang", "3140"],
            ["Bakso Daging Besar", "2172"],
            ["Bakso Urat Besar", "2166"],
            ["Mie Yamin Pangsit", "2060"],
          ]}
        />
        <DataTable
          title="Top 5 Minuman"
          alignLeft
          rows={[
            ["Air Mineral", "3641"],
            ["Teh Tawar", "3110"],
            ["Teh Manis", "2471"],
            ["Es Teler Durian Runtuh", "1486"],
            ["Jeruk", "1390"],
          ]}
        />
      </div>
    </>
  );
}

function UploadDrawer() {
  return (
    <>
      <DrawerHeader crumbs={["Manage Data", "Upload"]} title="Upload Data" />
      <div className="mt-3 rounded-md border border-gray-200 bg-gray-100 px-[19px] py-[11px] text-[13px] leading-[19px] text-gray-600">
        <div className="flex items-center gap-2 font-medium">
          <span className="flex size-[22px] items-center justify-center rounded-[4px] bg-gray-200 text-gray-700">
            <InfoIcon className="size-3.5" />
          </span>
          Info
        </div>
        <p className="mt-2">
          Start by downloading the template file here. Use this file format to make sure your data uploads correctly. Lost
          it? No worries, download again anytime
        </p>
        <div className="mt-2 flex">
          <GrayButton>
            <DownloadIcon className="mr-[11px] size-3.5 text-black" />
            Download Template
            <ChevronDown className="ml-[11px] size-2.5 text-gray-600" strokeWidth={2.5} />
          </GrayButton>
        </div>
      </div>
      <div className="mt-[19px] grid grid-cols-2 gap-x-[15px] gap-y-5">
        {["Sales Data", "Sales Target", "Profit & Loss Data", "Profit & Loss Target"].map((title) => (
          <section key={title}>
            <h2 className="text-[15px] leading-5 font-medium text-gray-800">{title}</h2>
            <div className="mt-[9px] flex h-[146px] flex-col items-center rounded-[4px] border-2 border-dashed border-gray-200 pt-[13px]">
              <span className="flex size-[35px] items-center justify-center rounded-[4px] bg-gray-100 text-gray-600">
                <FileChartIcon className="size-5" />
              </span>
              <p className="mt-2.5 text-[13px] leading-[19px] font-semibold text-gray-800">
                Choose a file or drag &amp; drop it here.
              </p>
              <p className="text-[13px] leading-[19px] text-gray-500">Only support xlsx and csv</p>
              <button
                type="button"
                className="mt-[9px] h-[23px] rounded-[4px] bg-gray-200 px-[11px] text-[11px] font-medium text-gray-800"
              >
                Browse File
              </button>
            </div>
          </section>
        ))}
      </div>
    </>
  );
}

/* ---------- branch analysis ---------- */

/* The bar is centred on the card's content, so with a single axis it reaches back over that axis column. */
function BranchChart({ axis, rightAxis, value }: { axis: string[]; rightAxis?: string[]; value: string }) {
  return (
    <div className="relative">
      <div className="flex">
        <AxisLabels items={axis} className="h-[180px] w-[42px]" />
        <div className="min-w-0 flex-1">
          <svg viewBox="0 0 470 215" preserveAspectRatio="none" className="block h-[200px] w-full">
            <GridLines ys={[9, 51, 96, 140, 190]} width={470} />
          </svg>
        </div>
        {rightAxis && <AxisLabels items={rightAxis} className="h-[180px] w-[42px] pl-[7px]" />}
      </div>
      <div className="mt-1.5 text-center text-[11px] leading-4 text-gray-500">Bakso Tujuh Pemuda</div>
      <div className="absolute top-[46px] left-1/2 h-[154px] w-[117px] -translate-x-1/2 rounded-t-[4px] bg-gray-300" />
      <Tooltip title="Bakso Tujuh Pemuda" value={value} className="-top-[3px] left-1/2 -ml-[57px]" />
    </div>
  );
}

function BranchPage() {
  return (
    <>
      <PageHeader title="Branch Analysis" />
      <div className="mt-[15px] grid grid-cols-3 gap-[15px]">
        <StatCard label="Omzet Tertinggi" value="Bakso Tujuh Pemuda">
          Rp1.865.251.400
        </StatCard>
        <StatCard label="Cabang Paling Ramai (by Check)" value="Bakso Tujuh Pemuda">
          12.764 checks
        </StatCard>
        <StatCard label="APC Tertinggi" value="Bakso Tujuh Pemuda">
          Rp146.134
        </StatCard>
      </div>
      <div className="mt-[15px] grid grid-cols-2 gap-[15px]">
        <Card className="pb-[25px]">
          <CardHeader title="Perbandingan Omzet & Total Check per Cabang" />
          <Legend items={[["Total Check", 2], ["Total Omzet", 3]]} />
          <div className="mt-5">
            <BranchChart axis={jutaAxis} rightAxis={jutaAxis} value="Rp41.950.600" />
          </div>
        </Card>
        <Card className="pb-[25px]">
          <CardHeader title="Perbandingan Average Check per Cabang" top />
          <div className="mt-[53px]">
            <BranchChart axis={["Rp100rb", "Rp80rb", "Rp60rb", "Rp40rb", "Rp20rb"]} value="Rp81.728" />
          </div>
        </Card>
      </div>
      <Card className="mt-[15px]">
        <CardHeader title="Detail Performa Cabang" />
        <table className="mt-3.5 w-full table-fixed text-left text-[11px] text-gray-500">
          <thead>
            <tr className="h-7 bg-gray-100">
              {["Cabang", "Total Omzet", "Total Check", "Average Check (APC)"].map((head) => (
                <th key={head} className="pl-[15px] font-medium">
                  {head}
                </th>
              ))}
            </tr>
          </thead>
          <tbody>
            <tr className="h-[33px]">
              <td className="pl-[15px] font-medium text-gray-800">Bakso Tujuh Pemuda</td>
              <td className="pl-[15px] font-medium text-gray-800">Rp1.865.251.400</td>
              <td className="pl-[15px] font-medium text-gray-800">12.764</td>
              <td className="pl-[15px] font-medium">Rp146.134</td>
            </tr>
          </tbody>
        </table>
      </Card>
    </>
  );
}

export default function App() {
  return (
    <div className="grid min-h-screen grid-cols-3 grid-rows-2 gap-x-11 gap-y-[67px] bg-white font-['Inter',sans-serif]">
      <Frame active="Dashboard">
        <DashboardPage />
      </Frame>
      <Frame active="Dashboard" drawer={<AnalyzeDrawer />}>
        <DashboardPage />
      </Frame>
      <Frame active="Manage Data" drawer={<SummaryDrawer />}>
        <ManagePage />
      </Frame>
      <Frame active="Manage Data">
        <ManagePage expanded />
      </Frame>
      <Frame active="Manage Data" drawer={<UploadDrawer />}>
        <ManagePage />
      </Frame>
      <Frame active="Branch Analysis">
        <BranchPage />
      </Frame>
    </div>
  );
}
